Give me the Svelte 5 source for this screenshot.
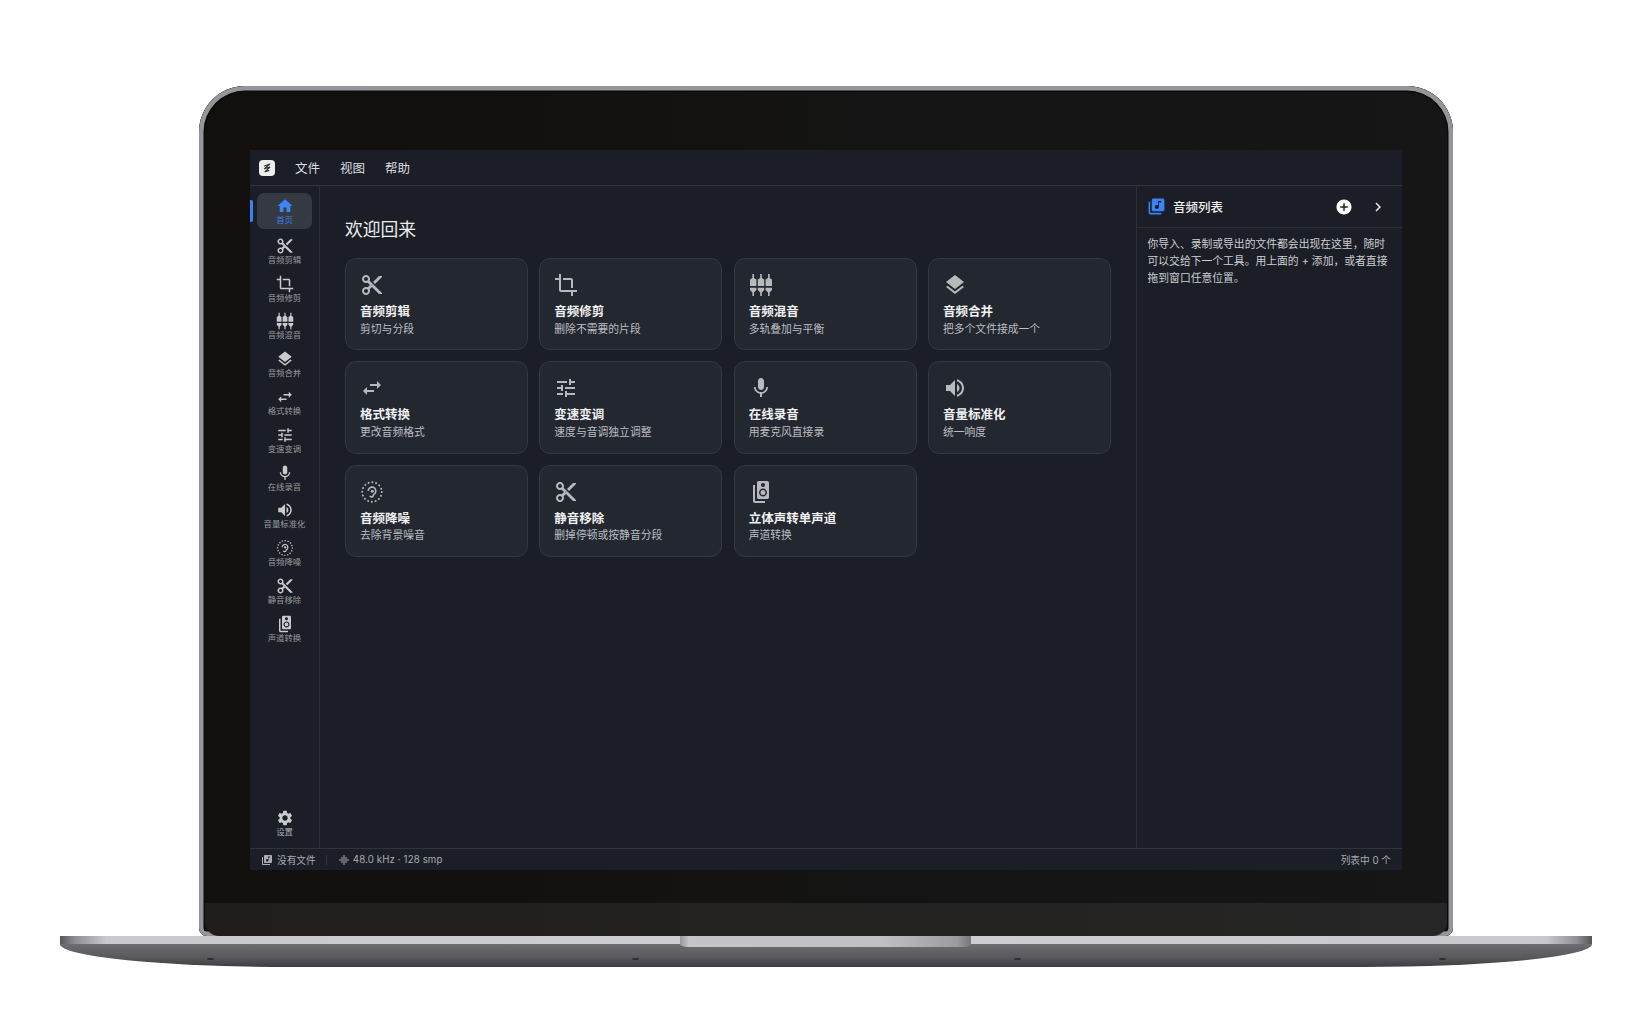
<script>
  const paths = {
    home: 'M10 20v-6h4v6h5v-8h3L12 3 2 12h3v8z',
    cut: 'M9.64 7.64c.23-.5.36-1.05.36-1.64 0-2.21-1.79-4-4-4S2 3.79 2 6s1.79 4 4 4c.59 0 1.14-.13 1.64-.36L10 12l-2.36 2.36C7.14 14.13 6.59 14 6 14c-2.21 0-4 1.79-4 4s1.79 4 4 4 4-1.79 4-4c0-.59-.13-1.14-.36-1.64L12 14l7 7h3v-1L9.64 7.64zM6 8c-1.1 0-2-.89-2-2s.9-2 2-2 2 .89 2 2-.9 2-2 2zm0 12c-1.1 0-2-.89-2-2s.9-2 2-2 2 .89 2 2-.9 2-2 2zm6-7.5c-.28 0-.5-.22-.5-.5s.22-.5.5-.5.5.22.5.5-.22.5-.5.5zM19 3l-6 6 2 2 7-7V3z',
    crop: 'M17 15h2V7c0-1.1-.9-2-2-2H9v2h8v8zM7 17V1H5v4H1v2h4v10c0 1.1.9 2 2 2h10v4h2v-4h4v-2H7z',
    mixer: 'M3.400 1h1.600v4l2.400 1.500V13H1V6.500L3.400 5zM11.200 1h1.600v4l2.400 1.500V13H8.800V6.500L11.200 5zM19 1h1.600v4L23 6.500V13h-6.400V6.500L19 5zM1 14.800h6.400V17L5 19.500V23H3.400v-3.500L1 17zM8.800 14.800h6.400V17l-2.400 2.500V23h-1.600v-3.500L8.800 17zM16.600 14.800H23V17l-2.400 2.500V23H19v-3.500L16.600 17z',
    layers: 'M11.99 18.54l-7.37-5.73L3 14.07l9 7 9-7-1.63-1.27-7.38 5.74zM12 16l7.36-5.73L21 9l-9-7-9 7 1.63 1.27L12 16z',
    swap: 'M6.99 11L3 15l3.99 4v-3H14v-2H6.99v-3zM21 9l-3.99-4v3H10v2h7.01v3L21 9z',
    tune: 'M3 17v2h6v-2H3zM3 5v2h10V5H3zm10 16v-2h8v-2h-8v-2h-2v6h2zM7 9v2H3v2h4v2h2V9H7zm14 4v-2H11v2h10zm-6-4h2V7h4V5h-4V3h-2v6z',
    mic: 'M12 14c1.66 0 2.99-1.34 2.99-3L15 5c0-1.66-1.34-3-3-3S9 3.34 9 5v6c0 1.66 1.34 3 3 3zm5.3-3c0 3-2.54 5.1-5.3 5.100S6.700 14 6.700 11H5c0 3.410 2.720 6.230 6 6.720V21h2v-3.280c3.280-.48 6-3.300 6-6.720h-1.700z',
    volume: 'M3 9v6h4l5 5V4L7 9H3zm13.500 3c0-1.770-1.020-3.290-2.500-4.030v8.050c1.480-.73 2.500-2.250 2.500-4.020zM14 3.230v2.060c2.890.86 5 3.540 5 6.710s-2.110 5.850-5 6.710v2.060c4.010-.91 7-4.490 7-8.770s-2.990-7.860-7-8.770z',
    speaker: 'M18.200 1H9.800C8.810 1 8 1.810 8 2.800v14.400c0 .99.81 1.790 1.800 1.790l8.400.01c.99 0 1.800-.81 1.800-1.800V2.800c0-.99-.81-1.800-1.800-1.800zM14 3c1.100 0 2 .89 2 2s-.9 2-2 2-2-.89-2-2 .9-2 2-2zm0 13.500c-2.210 0-4-1.790-4-4s1.790-4 4-4 4 1.790 4 4-1.790 4-4 4zM14 10a2.500 2.500 0 1 0 0 5 2.500 2.500 0 0 0 0-5zM6 5H4v16c0 1.100.89 2 2 2h10v-2H6V5z',
    settings: 'M19.140 12.940c.04-.3.06-.61.06-.94 0-.32-.02-.64-.07-.94l2.030-1.580c.18-.14.23-.41.12-.61l-1.920-3.320c-.12-.22-.37-.29-.59-.22l-2.390.96c-.5-.38-1.030-.7-1.620-.94l-.36-2.540c-.04-.24-.24-.41-.48-.41h-3.840c-.24 0-.43.17-.47.41l-.36 2.540c-.59.24-1.130.57-1.620.94l-2.390-.96c-.22-.08-.47 0-.59.22L2.740 8.870c-.12.21-.08.47.12.61l2.030 1.580c-.05.3-.09.63-.09.94s.02.64.07.94l-2.030 1.580c-.18.14-.23.41-.12.61l1.920 3.320c.12.22.37.29.59.22l2.390-.96c.5.38 1.030.7 1.620.94l.36 2.540c.05.24.24.41.48.41h3.840c.24 0 .44-.17.47-.41l.36-2.540c.59-.24 1.130-.56 1.620-.94l2.390.96c.22.08.47 0 .59-.22l1.920-3.320c.12-.22.07-.47-.12-.61l-2.010-1.580zM12 15.600c-1.980 0-3.600-1.620-3.600-3.600s1.620-3.600 3.600-3.600 3.600 1.620 3.600 3.600-1.620 3.600-3.600 3.600z',
    library: 'M20 2H8c-1.100 0-2 .9-2 2v12c0 1.100.9 2 2 2h12c1.100 0 2-.9 2-2V4c0-1.100-.9-2-2-2zm-2 5h-3v5.500c0 1.380-1.120 2.500-2.500 2.500S10 13.880 10 12.500s1.120-2.500 2.500-2.500c.57 0 1.080.19 1.500.51V5h4v2zM4 6H2v14c0 1.100.9 2 2 2h14v-2H4V6z',
    eq: 'M7 18h2V6H7v12zm4 4h2V2h-2v20zm-8-8h2v-4H3v4zm12 4h2V6h-2v12zm4-8v4h2v-4h-2z',
    add: 'M12 2C6.480 2 2 6.480 2 12s4.480 10 10 10 10-4.480 10-10S17.520 2 12 2zm5 11h-4v4h-2v-4H7v-2h4V7h2v4h4v2z',
    chevron: 'M10 6L8.590 7.410 13.170 12l-4.580 4.590L10 18l6-6z'
  };

  const tools = [
    { icon: 'cut', nav: '音频剪辑', title: '音频剪辑', desc: '剪切与分段' },
    { icon: 'crop', nav: '音频修剪', title: '音频修剪', desc: '删除不需要的片段' },
    { icon: 'mixer', nav: '音频混音', title: '音频混音', desc: '多轨叠加与平衡' },
    { icon: 'layers', nav: '音频合并', title: '音频合并', desc: '把多个文件接成一个' },
    { icon: 'swap', nav: '格式转换', title: '格式转换', desc: '更改音频格式' },
    { icon: 'tune', nav: '变速变调', title: '变速变调', desc: '速度与音调独立调整' },
    { icon: 'mic', nav: '在线录音', title: '在线录音', desc: '用麦克风直接录' },
    { icon: 'volume', nav: '音量标准化', title: '音量标准化', desc: '统一响度' },
    { icon: 'noise', nav: '音频降噪', title: '音频降噪', desc: '去除背景噪音' },
    { icon: 'cut', nav: '静音移除', title: '静音移除', desc: '删掉停顿或按静音分段' },
    { icon: 'speaker', nav: '声道转换', title: '立体声转单声道', desc: '声道转换' }
  ];
</script>

{#snippet icon(name)}
  <svg viewBox="0 0 24 24" fill="currentColor" aria-hidden="true">
    {#if name === 'noise'}
      <circle cx="12" cy="12" r="9.800" fill="none" stroke="currentColor" stroke-width="1.900" stroke-linecap="round" stroke-dasharray="0.1 3.750" />
      <path d="M8.200 11a3.800 3.800 0 1 1 6.700 2.400c-.8.9-1.300 1.100-1.600 2.100a1.800 1.800 0 0 1-3.400.3" fill="none" stroke="currentColor" stroke-width="1.600" />
      <circle cx="12.200" cy="11.200" r="1.500" />
    {:else}
      <path d={paths[name]} />
    {/if}
  </svg>
{/snippet}

<div class="page">
  <div class="lid">
    <div class="app">
      <header class="menubar">
        <div class="logo">
          <svg viewBox="0 0 16 16" fill="none" stroke="#33363c" stroke-width="1.200" stroke-linecap="round" stroke-linejoin="round">
            <path d="M5.500 6 L10.800 4 L5.500 8.600 L10.800 7.200 L6 11.600 L9.800 10.600" />
          </svg>
        </div>
        <span>文件</span>
        <span>视图</span>
        <span>帮助</span>
      </header>

      <div class="body">
        <nav class="sidebar">
          <button class="nav-item active">
            {@render icon('home')}
            <span>首页</span>
          </button>
          {#each tools as t}
            <button class="nav-item">
              {@render icon(t.icon)}
              <span>{t.nav}</span>
            </button>
          {/each}
          <button class="nav-item settings">
            {@render icon('settings')}
            <span>设置</span>
          </button>
        </nav>

        <main class="main">
          <h1>欢迎回来</h1>
          <div class="grid">
            {#each tools as t}
              <div class="card">
                {@render icon(t.icon)}
                <div class="card-title">{t.title}</div>
                <div class="card-desc">{t.desc}</div>
              </div>
            {/each}
          </div>
        </main>

        <aside class="panel">
          <div class="panel-head">
            <span class="panel-icon">{@render icon('library')}</span>
            <span class="panel-title">音频列表</span>
            <span class="panel-add">{@render icon('add')}</span>
            <span class="panel-toggle">{@render icon('chevron')}</span>
          </div>
          <p>你导入、录制或导出的文件都会出现在这里，随时可以交给下一个工具。用上面的 + 添加，或者直接拖到窗口任意位置。</p>
        </aside>
      </div>

      <footer class="status">
        <span class="status-icon">{@render icon('library')}</span>
        <span>没有文件</span>
        <i class="sep"></i>
        <span class="status-icon">{@render icon('eq')}</span>
        <span class="rate">48.0 kHz · 128 smp</span>
        <span class="count">列表中 0 个</span>
      </footer>
    </div>
    <div class="chin"></div>
  </div>

  <div class="base">
    <div class="strip"></div>
    <div class="belly"></div>
    <div class="hinge"></div>
    <i class="dot d1"></i>
    <i class="dot d2"></i>
    <i class="dot d3"></i>
    <i class="dot d4"></i>
  </div>
</div>

<style>
  :global(body) {
    margin: 0;
    background: #fff;
  }

  .page {
    height: 1020px;
    padding-top: 86px;
    box-sizing: border-box;
    display: flex;
    flex-direction: column;
    align-items: center;
    font-family: Inter, "Noto Sans CJK SC", sans-serif;
    overflow: hidden;
  }

  .lid {
    width: 1254px;
    height: 850px;
    box-sizing: border-box;
    padding: 64px 51px 0;
    display: flex;
    flex-direction: column;
    border-radius: 46px 46px 8px 8px;
    background: linear-gradient(90deg, #120f0c, #141414 60%, #161616);
    box-shadow: inset 0 0 0 4.500px #96969a, inset 0 0 0 6px #0a0a0c;
  }

  .app {
    width: 1152px;
    height: 720px;
    flex: none;
    display: flex;
    flex-direction: column;
    background: #1b1e26;
    color: #dcdde0;
  }

  .chin {
    height: 33px;
    margin: 33px -45px 0;
    flex: none;
    background: linear-gradient(90deg, #201d1a, #242220 50%, #262626);
    border-radius: 0 0 14px 14px;
  }

  .menubar {
    height: 36px;
    flex: none;
    display: flex;
    align-items: center;
    gap: 20px;
    padding-left: 9px;
    box-sizing: border-box;
    border-bottom: 1px solid #30333a;
    font-size: 12.500px;
  }

  .logo {
    width: 16px;
    height: 16px;
    background: #eceded;
    border-radius: 4px;
    display: flex;
  }

  .body {
    flex: 1;
    min-height: 0;
    display: flex;
  }

  .sidebar {
    width: 70px;
    flex: none;
    box-sizing: border-box;
    padding: 7px 7px;
    display: flex;
    flex-direction: column;
    gap: 1.800px;
    border-right: 1px solid #2d3037;
  }

  .nav-item {
    position: relative;
    height: 36px;
    flex: none;
    padding: 4px 0 0;
    border: 0;
    border-radius: 7px;
    background: none;
    color: #c9cacd;
    display: flex;
    flex-direction: column;
    align-items: center;
    font-family: inherit;
  }

  .nav-item svg {
    width: 18px;
    height: 18px;
    flex: none;
  }

  .nav-item span {
    font-size: 8.400px;
    line-height: 11px;
    color: #989a9f;
    white-space: nowrap;
  }

  .nav-item.active {
    margin-bottom: 2px;
    background: #353941;
    color: #3d85f7;
  }

  .nav-item.active span {
    color: #3d7fe6;
  }

  .nav-item.active::before {
    content: "";
    position: absolute;
    left: -7px;
    top: 7px;
    width: 3px;
    height: 22px;
    border-radius: 0 2px 2px 0;
    background: #3b82f6;
  }

  .nav-item.settings {
    margin-top: auto;
  }

  .nav-item.settings span {
    color: #a9abaf;
  }

  .main {
    flex: 1;
    min-width: 0;
    padding: 31.500px 25px 0;
    box-sizing: border-box;
  }

  h1 {
    margin: 0 0 17.500px;
    font-size: 17.800px;
    line-height: 23px;
    font-weight: 400;
    color: #eceded;
  }

  .grid {
    display: grid;
    grid-template-columns: repeat(4, 1fr);
    column-gap: 11.300px;
    row-gap: 11.100px;
  }

  .card {
    height: 92.300px;
    box-sizing: border-box;
    padding: 14px 14px 0;
    background: #23272f;
    border: 1px solid #343840;
    border-radius: 11px;
    color: #b8b9bc;
  }

  .card svg {
    display: block;
    width: 24px;
    height: 24px;
  }

  .card-title {
    margin-top: 6px;
    font-size: 12.500px;
    line-height: 17px;
    font-weight: 700;
    color: #f0f1f2;
    white-space: nowrap;
  }

  .card-desc {
    margin-top: 1.500px;
    font-size: 10.800px;
    line-height: 16px;
    color: #bcbec2;
    white-space: nowrap;
  }

  .panel {
    width: 266px;
    flex: none;
    box-sizing: border-box;
    border-left: 1px solid #2d3037;
  }

  .panel-head {
    height: 42px;
    box-sizing: border-box;
    padding: 0 15.500px 0 10px;
    display: flex;
    align-items: center;
    border-bottom: 1px solid #2d3037;
  }

  .panel-icon {
    display: flex;
    color: #3b82f6;
  }

  .panel-icon svg {
    width: 19px;
    height: 19px;
  }

  .panel-title {
    margin-left: 7px;
    font-size: 12.500px;
    font-weight: 500;
    color: #eceded;
  }

  .panel-add {
    margin-left: auto;
    display: flex;
    color: #fff;
  }

  .panel-add svg,
  .panel-toggle svg {
    width: 18px;
    height: 18px;
  }

  .panel-toggle {
    margin-left: 16px;
    display: flex;
    color: #e8e8e8;
  }

  .panel p {
    margin: 8px 11px 0 10.500px;
    font-size: 10.800px;
    line-height: 17.200px;
    color: #cdced1;
  }

  .status {
    height: 22px;
    flex: none;
    box-sizing: border-box;
    padding: 0 11px;
    display: flex;
    align-items: center;
    border-top: 1px solid #30333a;
    font-size: 9.700px;
    color: #a9abaf;
  }

  .status-icon {
    display: flex;
    margin-right: 4px;
    color: #a9abaf;
  }

  .status-icon svg {
    width: 12px;
    height: 12px;
  }

  .sep {
    width: 1px;
    height: 10px;
    margin: 0 10.500px;
    background: #34373d;
  }

  .sep + .status-icon {
    margin-right: 3px;
  }

  .rate {
    letter-spacing: 0.120px;
  }

  .count {
    margin-left: auto;
  }

  .base {
    position: relative;
    width: 1532px;
    flex: none;
  }

  .strip {
    height: 8px;
    background: linear-gradient(90deg, #55555a 0, #8f8f94 1%, #c9c9cd 3%, #cfcfd3 50%, #c9c9cd 97%, #8f8f94 99%, #55555a 100%);
  }

  .belly {
    height: 23px;
    background: linear-gradient(180deg, #6e6d72, #58575c 60%, #3d3c40);
    border-radius: 0 0 230px 230px / 0 0 23px 23px;
  }

  .hinge {
    position: absolute;
    left: 620px;
    top: 0;
    width: 291px;
    height: 11px;
    border-radius: 0 0 8px 8px / 0 0 3px 3px;
    background: linear-gradient(90deg, #98989c, #c4c4c9 3%, #bfbfc4 70%, #9c9ca0 95%, #77777a);
  }

  .dot {
    position: absolute;
    top: 22px;
    width: 7px;
    height: 2px;
    border-radius: 50%;
    background: #2c2c34;
  }

  .d1 { left: 147px; }
  .d2 { left: 572px; }
  .d3 { left: 954px; }
  .d4 { left: 1379px; }
</style>
